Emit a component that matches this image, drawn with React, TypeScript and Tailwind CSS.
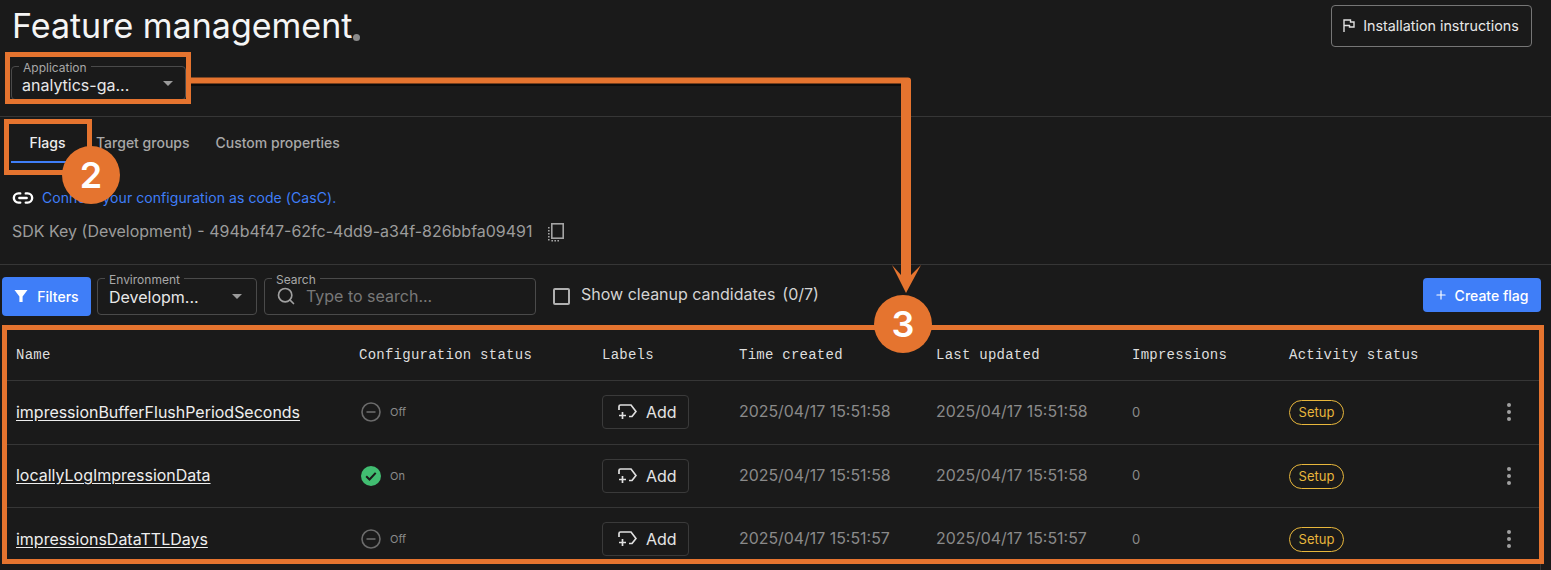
import { Link2, Plus, Search } from 'lucide-react';

const sans = "font-['Inter','Liberation_Sans',sans-serif]";

const flags = [
  { name: 'impressionBufferFlushPeriodSeconds', on: false, time: '2025/04/17 15:51:58', updated: '2025/04/17 15:51:58' },
  { name: 'locallyLogImpressionData', on: true, time: '2025/04/17 15:51:58', updated: '2025/04/17 15:51:58' },
  { name: 'impressionsDataTTLDays', on: false, time: '2025/04/17 15:51:57', updated: '2025/04/17 15:51:57' },
];

const columns = ['Name', 'Configuration status', 'Labels', 'Time created', 'Last updated', 'Impressions', 'Activity status', ''];
const grid = 'grid grid-cols-[343px_243px_137px_197px_196px_157px_212px_1fr]';

function Caret() {
  return (
    <svg width="10" height="5" viewBox="0 0 10 5" className="shrink-0">
      <path d="M0 0h10L5 5z" fill="#9a9a9a" />
    </svg>
  );
}

function FlagIcon() {
  return (
    <svg width="12" height="13" viewBox="0 0 12 13" fill="none" stroke="#e0e0e0" className="shrink-0">
      <path d="M1 13V1h6.5v2H11v5H6.5V6.5H1" strokeWidth="1.4" />
    </svg>
  );
}

function AddLabelIcon() {
  return (
    <svg width="20" height="18" viewBox="0 0 20 18" fill="none" stroke="#e0e0e0" strokeWidth="1.7" className="shrink-0">
      <path d="M2 7V3.5A1.5 1.5 0 0 1 3.5 2H14l5 6.5-4 5h-3" />
      <path d="M5.5 9v7M2 12.5h7" />
    </svg>
  );
}

function CopyIcon() {
  return (
    <svg width="18" height="20" viewBox="0 0 18 20" fill="none" stroke="#a4a4a4" className="shrink-0">
      <rect x="4.8" y="1.8" width="11.4" height="14.4" strokeWidth="1.6" />
      <path d="M1.8 5v1.6M1.8 8v1.6M1.8 11v1.6M1.8 14v1.6M1.8 17v1.6M4.4 18.8H6M7.4 18.8H9M10.4 18.8H12" strokeWidth="1.6" />
    </svg>
  );
}

function StatusIcon({ on }: { on: boolean }) {
  if (on) {
    return (
      <svg width="20" height="20" viewBox="0 0 20 20" className="shrink-0">
        <circle cx="10" cy="10" r="10" fill="#41bd71" />
        <path d="M5.2 10.3l3.3 3.2 6.2-6.6" fill="none" stroke="#1a1a1a" strokeWidth="2" />
      </svg>
    );
  }
  return (
    <svg width="20" height="20" viewBox="0 0 20 20" fill="none" stroke="#6b6b6b" strokeWidth="1.6" className="shrink-0">
      <circle cx="10" cy="10" r="9" />
      <path d="M5.5 10h9" />
    </svg>
  );
}

function OutlinedField({ label, className, children }: { label: string; className: string; children: React.ReactNode }) {
  return (
    <div className={`relative flex items-center border border-[#4a4a4a] rounded ${className}`}>
      <span className="absolute -top-[6px] left-[7px] bg-[#1a1a1a] px-1 text-xs leading-[14px] text-[#a8a8a8]">{label}</span>
      {children}
    </div>
  );
}

// orange callouts drawn over the page
function Annotations() {
  return (
    <div className={`absolute inset-0 pointer-events-none ${sans}`}>
      <div className="absolute left-[5px] top-[52px] w-[186px] h-[52px] border-[5px] border-[#e5742f]" />
      <div className="absolute left-[4px] top-[119px] w-[88px] h-[56px] border-[5px] border-[#e5742f]" />
      <div className="absolute left-[2px] top-[325px] w-[1542px] h-[239px] border-[5px] border-[#e5742f]" />
      <svg width="1551" height="570" viewBox="0 0 1551 570" className="absolute inset-0">
        <path d="M191 84.5H901" stroke="#000" strokeWidth="3" opacity="0.5" />
        <path d="M191 77.5H908a3 3 0 0 1 3 3V275l10-10-15 28-14-28 9 10V83.5H191z" fill="#e5742f" />
      </svg>
      <div className="absolute left-[62px] top-[146px] w-[58px] h-[58px] rounded-full bg-[#e5742f] flex items-center justify-center text-white text-[36px] font-semibold">
        2
      </div>
      <div className="absolute left-[874px] top-[295px] w-[58px] h-[58px] rounded-full bg-[#e5742f] flex items-center justify-center text-white text-[36px] font-semibold">
        3
      </div>
    </div>
  );
}

export default function App() {
  return (
    <div className={`relative h-[570px] w-[1551px] overflow-hidden bg-[#1a1a1a] text-[#e8e8e8] ${sans}`}>
      <div className="flex items-start justify-between pl-3 pr-[19px] pt-[5px]">
        <h1 className="flex items-end text-[34px] leading-[42px] text-[#f5f5f5]">
          Feature management
          <span className="mb-[6px] ml-[1px] w-[7px] h-[7px] rounded-full bg-[#8a8a8a]" />
        </h1>
        <button className="flex items-center gap-[8px] h-[42px] w-[201px] justify-center pb-[1px] pr-[1px] border border-[#767676] rounded text-[14.3px] text-[#e8e8e8]">
          <FlagIcon />
          Installation instructions
        </button>
      </div>

      <div className="pl-[11px] pt-[19px] h-[70px] border-b border-[#363636]">
        <OutlinedField label="Application" className="w-[175px] h-[34px] pl-[10px] pr-3 justify-between">
          <span className="text-[16px] pt-[3px] text-[#e8e8e8]">analytics-ga...</span>
          <Caret />
        </OutlinedField>
      </div>

      <div className="flex h-[47px] pl-[11px] text-[14px] font-medium">
        <div className="flex items-center justify-center w-[73px] h-[46px] pt-[6px] border-b-2 border-[#3f7ef8] text-[#ededed]">Flags</div>
        <div className="flex items-center pl-[12px] pt-[5px] pb-[1px] text-[#a8a8a8]">Target groups</div>
        <div className="flex items-center pl-[26px] pt-[5px] pb-[1px] text-[#a8a8a8]">Custom properties</div>
      </div>

      <div className="h-[101px] border-b border-[#363636] pl-3">
        <div className="flex items-center gap-[8px] pt-[22px] h-[45px] text-[14px] tracking-[0.07px] text-[#3f7ef8]">
          <Link2 size={22} strokeWidth={2.6} color="#ffffff" />
          Connect your configuration as code (CasC).
        </div>
        <div className="flex items-center gap-[15px] pt-[11px] text-[15.98px] text-[#9c9c9c]">
          SDK Key (Development) - 494b4f47-62fc-4dd9-a34f-826bbfa09491
          <CopyIcon />
        </div>
      </div>

      <div className="flex items-center pl-[2px] pr-[10px] pt-[1px] h-[61px] text-[14px]">
        <button className="flex items-center justify-center gap-[9px] w-[89px] h-[39px] rounded bg-[#3f7ef8] text-white font-medium">
          <svg width="14" height="14" viewBox="0 0 14 14" className="shrink-0">
            <path d="M0.5 1h13L8.6 7.5V13H5.4V7.5z" fill="#ffffff" />
          </svg>
          Filters
        </button>
        <OutlinedField label="Environment" className="ml-[6px] w-[160px] h-[37px] pl-[11px] pr-[14px] justify-between">
          <span className="text-[16px] pt-[1px]">Developm...</span>
          <Caret />
        </OutlinedField>
        <OutlinedField label="Search" className="ml-[7px] w-[272px] h-[37px] pl-[11px]">
          <Search size={20} color="#a0a0a0" className="shrink-0" />
          <span className="ml-[10px] mb-[1px] text-[16px] text-[#787878]">Type to search...</span>
        </OutlinedField>
        <span className="ml-[17px] w-[17px] h-[17px] rounded-[2px] border-2 border-[#b0b0b0]" />
        <span className="ml-[11px] mb-[5px] text-[16px] text-[#d4d4d4]">Show cleanup candidates</span>
        <span className="ml-[7px] mb-[5px] text-[16px] text-[#d4d4d4]">(0/7)</span>
        <button className="ml-auto self-start mt-[12px] flex items-center justify-center gap-[7px] w-[118px] h-[34px] pr-[2px] rounded bg-[#3f7ef8] text-white font-medium">
          <Plus size={14} strokeWidth={2} />
          Create flag
        </button>
      </div>

      <div className="mt-[5px] ml-[7px] w-[1534px] h-[240px] border-r border-[#363636]">
        <div className={`${grid} h-[50px] pb-[1px] items-center border-b border-[#363636] pl-[9px] font-['Liberation_Mono',monospace] text-[14px] tracking-[0.25px] text-[#dedede]`}>
          {columns.map((c) => (
            <div key={c}>{c}</div>
          ))}
        </div>
        {flags.map((f) => (
          <div key={f.name} className={`${grid} h-[63.5px] items-center border-b border-[#363636] pl-[9px]`}>
            <div className="pt-[1px] text-[15.98px] underline underline-offset-2 text-[#eeeeee]">{f.name}</div>
            <div className="flex items-center gap-[9px] pl-[2px] text-[11px] text-[#8a8a8a]">
              <StatusIcon on={f.on} />
              {f.on ? 'On' : 'Off'}
            </div>
            <div>
              <button className="flex items-center gap-[9px] w-[87px] h-[34px] pl-[14px] border border-[#3a3a3a] rounded text-[16px] text-[#e4e4e4]">
                <AddLabelIcon />
                Add
              </button>
            </div>
            <div className="text-[15.9px] text-[#8a8a8a]">{f.time}</div>
            <div className="text-[15.9px] text-[#8a8a8a]">{f.updated}</div>
            <div className="text-[13px] text-[#8a8a8a]">0</div>
            <div>
              <span className="inline-flex items-center justify-center w-[55px] h-[25px] rounded-full border border-[#e8b73c] text-[13px] text-[#e8b73c]">
                Setup
              </span>
            </div>
            <div className="flex flex-col items-center gap-[3px] w-[6px] ml-[5px]">
              <span className="w-1 h-1 rounded-full bg-[#a0a0a0]" />
              <span className="w-1 h-1 rounded-full bg-[#a0a0a0]" />
              <span className="w-1 h-1 rounded-full bg-[#a0a0a0]" />
            </div>
          </div>
        ))}
      </div>

      <Annotations />
    </div>
  );
}
